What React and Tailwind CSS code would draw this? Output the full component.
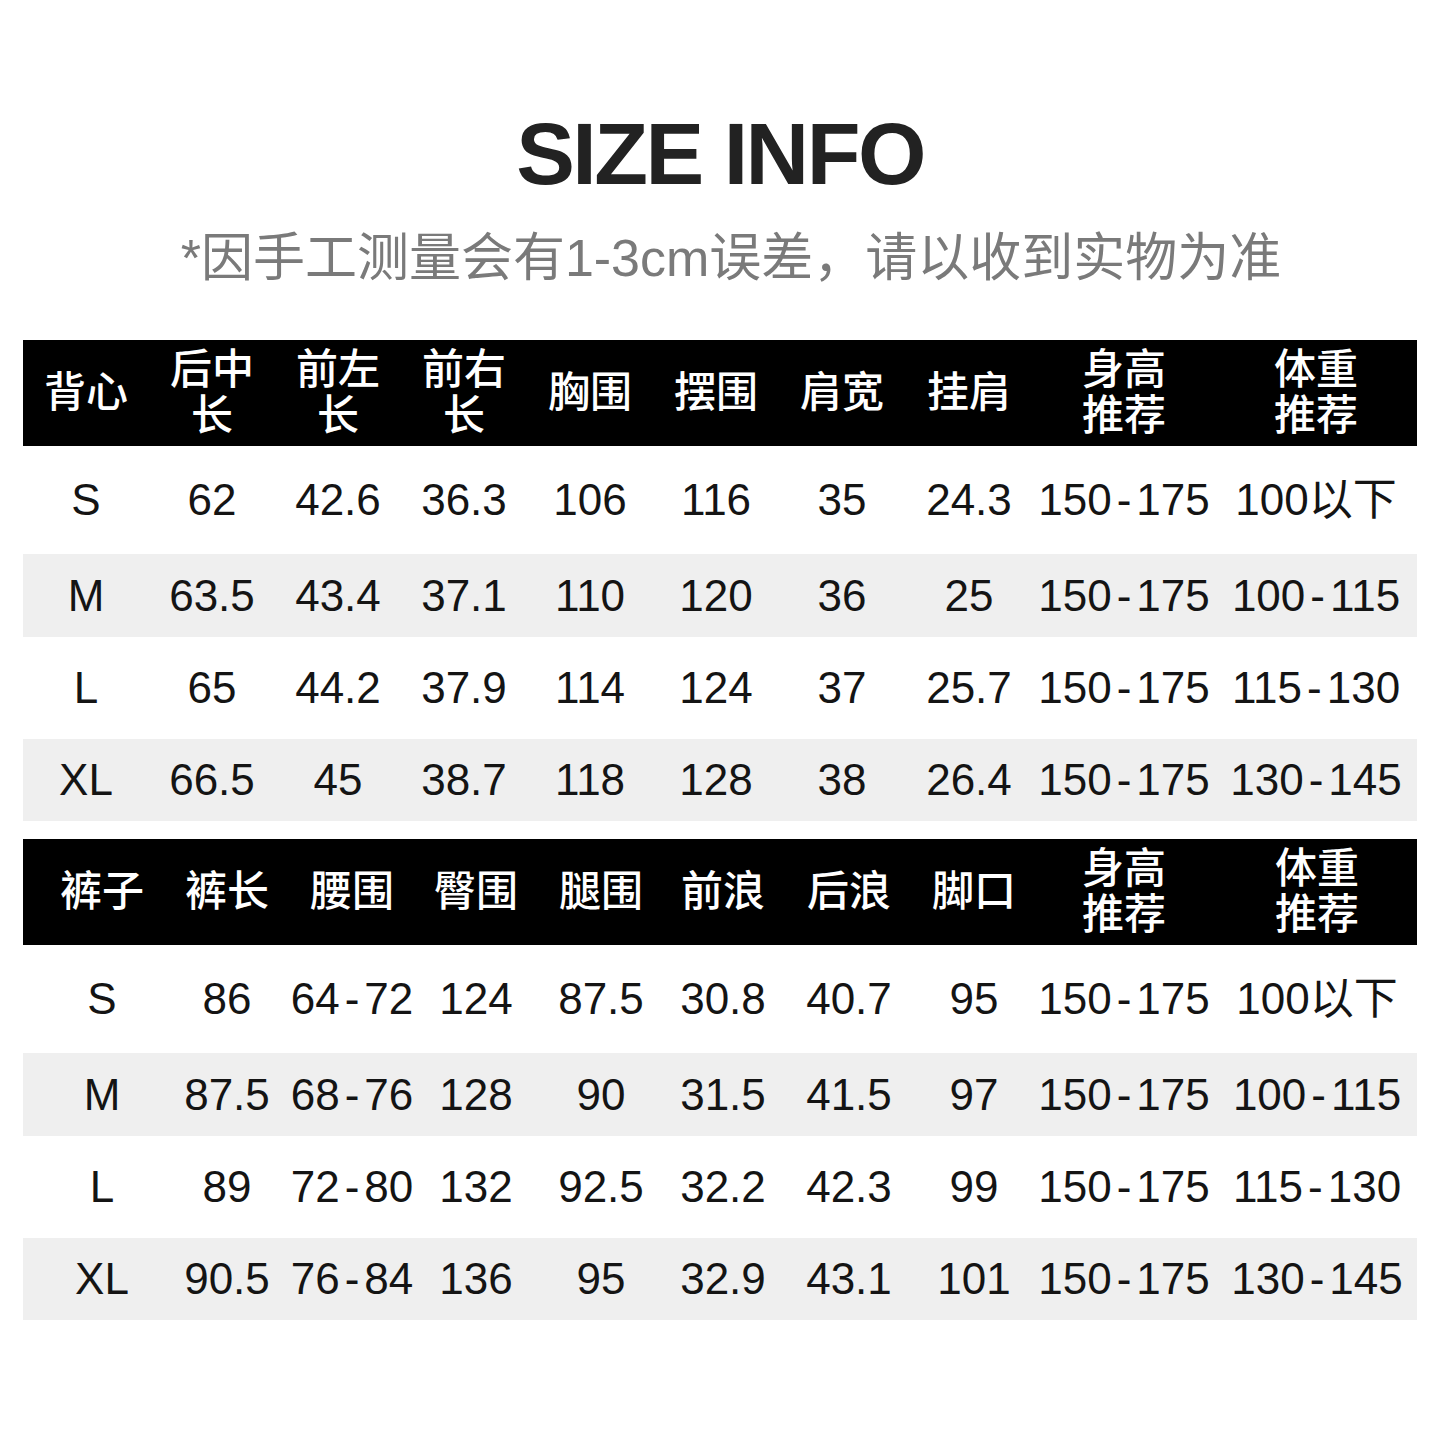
const FONT = { fontFamily: '"Liberation Sans", "Noto Sans CJK SC", sans-serif' }

const VEST = {
  cols: 'grid-cols-[126px_126px_126px_126px_126px_126px_126px_128px_182px_1fr]',
  head: [['背心'], ['后中', '长'], ['前左', '长'], ['前右', '长'], ['胸围'], ['摆围'], ['肩宽'], ['挂肩'], ['身高', '推荐'], ['体重', '推荐']],
  rows: [
    ['S', '62', '42.6', '36.3', '106', '116', '35', '24.3', '150-175', '100以下'],
    ['M', '63.5', '43.4', '37.1', '110', '120', '36', '25', '150-175', '100-115'],
    ['L', '65', '44.2', '37.9', '114', '124', '37', '25.7', '150-175', '115-130'],
    ['XL', '66.5', '45', '38.7', '118', '128', '38', '26.4', '150-175', '130-145'],
  ],
}

const PANTS = {
  cols: 'grid-cols-[142px_124px_126px_122px_128px_116px_136px_114px_186px_1fr]',
  first: 'pl-[16px]',
  head: [['裤子'], ['裤长'], ['腰围'], ['臀围'], ['腿围'], ['前浪'], ['后浪'], ['脚口'], ['身高', '推荐'], ['体重', '推荐']],
  rows: [
    ['S', '86', '64-72', '124', '87.5', '30.8', '40.7', '95', '150-175', '100以下'],
    ['M', '87.5', '68-76', '128', '90', '31.5', '41.5', '97', '150-175', '100-115'],
    ['L', '89', '72-80', '132', '92.5', '32.2', '42.3', '99', '150-175', '115-130'],
    ['XL', '90.5', '76-84', '136', '95', '32.9', '43.1', '101', '150-175', '130-145'],
  ],
}

// row heights copied off the picture: white, grey, white, grey
const ROW_STYLE = ['h-[108px] bg-white', 'h-[83px] bg-[#efefef]', 'h-[102px] bg-white', 'h-[82px] bg-[#efefef]']

// the range dash sits a little apart from its numbers
function Val({ v }) {
  const i = v.indexOf('-')
  if (i < 0) return v
  return <>{v.slice(0, i)}<span className="mx-[5px]">-</span>{v.slice(i + 1)}</>
}

function SizeTable({ t, className = '' }) {
  return (
    <div className={className}>
      <div className={`grid ${t.cols} h-[106px] bg-black text-white`}>
        {t.head.map((lines, i) => (
          <div key={i} className={`flex flex-col items-center justify-center text-[42px] leading-[46px] font-medium ${i === 0 ? t.first ?? '' : ''}`}>
            {lines.map(l => <span key={l}>{l}</span>)}
          </div>
        ))}
      </div>
      {t.rows.map((r, ri) => (
        <div key={ri} className={`grid ${t.cols} ${ROW_STYLE[ri]} text-[#141414]`}>
          {r.map((v, i) => (
            <div key={i} className={`flex items-center justify-center text-[44px] leading-none whitespace-nowrap ${i === 0 ? t.first ?? '' : ''}`}>
              <Val v={v} />
            </div>
          ))}
        </div>
      ))}
    </div>
  )
}

export default function App() {
  return (
    <div className="w-[1440px] h-[1440px] bg-white overflow-hidden" style={FONT}>
      <h1 className="pt-[110px] text-center text-[88px] leading-[88px] font-bold tracking-[-2.5px] text-[#222]">SIZE INFO</h1>
      <p className="mt-[34px] pl-[22px] text-center text-[52px] leading-[52px] text-[#7a7a7a] whitespace-nowrap">*因手工测量会有1-3cm误差，请以收到实物为准</p>
      <div className="mx-[23px] mt-[56px]">
        <SizeTable t={VEST} />
        <SizeTable t={PANTS} className="mt-[18px]" />
      </div>
    </div>
  )
}
